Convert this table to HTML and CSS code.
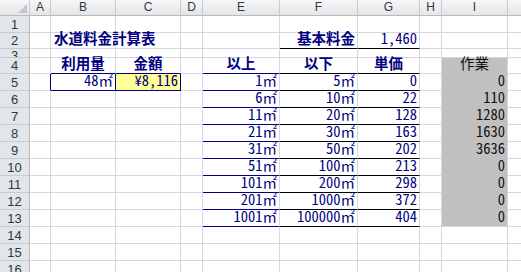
FILE: index.html
```html
<!DOCTYPE html>
<html lang="ja">
<head>
<meta charset="utf-8">
<title>水道料金計算表</title>
<link rel="stylesheet" href="styles.css">
</head>
<body>
<div class="view">
<div class="sheet">
  <div class="h corner"><div class="tri"></div></div>
  <div class="h">A</div><div class="h">B</div><div class="h">C</div><div class="h">D</div><div class="h">E</div><div class="h">F</div><div class="h">G</div><div class="h">H</div><div class="h">I</div><div class="h"></div>

  <div class="r">1</div>
  <div class="c"></div><div class="c"></div><div class="c"></div><div class="c"></div><div class="c"></div><div class="c"></div><div class="c"></div><div class="c"></div><div class="c"></div><div class="c"></div>

  <div class="r">2</div>
  <div class="c"></div><div class="c b title">水道料金計算表</div><div class="c"></div><div class="c"></div><div class="c"></div><div class="c b rt bk">基本料金</div><div class="c rt bk">1,460</div><div class="c"></div><div class="c"></div><div class="c"></div>

  <div class="r r3">3</div>
  <div class="c"></div><div class="c"></div><div class="c"></div><div class="c"></div><div class="c"></div><div class="c"></div><div class="c"></div><div class="c"></div><div class="c"></div><div class="c"></div>

  <div class="r">4</div>
  <div class="c"></div><div class="c b ctr bn">利用量</div><div class="c b ctr bn">金額</div><div class="c"></div><div class="c b ctr bn">以上</div><div class="c b ctr bk">以下</div><div class="c b ctr bk">単価</div><div class="c"></div><div class="c g ctr">作業</div><div class="c"></div>

  <div class="r">5</div>
  <div class="c rn"></div><div class="c rt bn rn">48㎡</div><div class="c rt y bn rn">¥8,116</div><div class="c"></div><div class="c rt bn">1㎡</div><div class="c rt bk">5㎡</div><div class="c rt bk">0</div><div class="c"></div><div class="c g rt">0</div><div class="c"></div>

  <div class="r">6</div>
  <div class="c"></div><div class="c"></div><div class="c"></div><div class="c"></div><div class="c rt bn">6㎡</div><div class="c rt bk">10㎡</div><div class="c rt bk">22</div><div class="c"></div><div class="c g rt">110</div><div class="c"></div>

  <div class="r">7</div>
  <div class="c"></div><div class="c"></div><div class="c"></div><div class="c"></div><div class="c rt bn">11㎡</div><div class="c rt bk">20㎡</div><div class="c rt bk">128</div><div class="c"></div><div class="c g rt">1280</div><div class="c"></div>

  <div class="r">8</div>
  <div class="c"></div><div class="c"></div><div class="c"></div><div class="c"></div><div class="c rt bn">21㎡</div><div class="c rt bk">30㎡</div><div class="c rt bk">163</div><div class="c"></div><div class="c g rt">1630</div><div class="c"></div>

  <div class="r">9</div>
  <div class="c"></div><div class="c"></div><div class="c"></div><div class="c"></div><div class="c rt bn">31㎡</div><div class="c rt bk">50㎡</div><div class="c rt bk">202</div><div class="c"></div><div class="c g rt">3636</div><div class="c"></div>

  <div class="r">10</div>
  <div class="c"></div><div class="c"></div><div class="c"></div><div class="c"></div><div class="c rt bn">51㎡</div><div class="c rt bk">100㎡</div><div class="c rt bk">213</div><div class="c"></div><div class="c g rt">0</div><div class="c"></div>

  <div class="r">11</div>
  <div class="c"></div><div class="c"></div><div class="c"></div><div class="c"></div><div class="c rt bn">101㎡</div><div class="c rt bk">200㎡</div><div class="c rt bk">298</div><div class="c"></div><div class="c g rt">0</div><div class="c"></div>

  <div class="r">12</div>
  <div class="c"></div><div class="c"></div><div class="c"></div><div class="c"></div><div class="c rt bn">201㎡</div><div class="c rt bk">1000㎡</div><div class="c rt bk">372</div><div class="c"></div><div class="c g rt">0</div><div class="c"></div>

  <div class="r">13</div>
  <div class="c"></div><div class="c"></div><div class="c"></div><div class="c"></div><div class="c rt bn">1001㎡</div><div class="c rt bk">100000㎡</div><div class="c rt bk">404</div><div class="c"></div><div class="c g g-last rt">0</div><div class="c"></div>

  <div class="r">14</div>
  <div class="c"></div><div class="c"></div><div class="c"></div><div class="c"></div><div class="c"></div><div class="c"></div><div class="c"></div><div class="c"></div><div class="c"></div><div class="c"></div>

  <div class="r">15</div>
  <div class="c"></div><div class="c"></div><div class="c"></div><div class="c"></div><div class="c"></div><div class="c"></div><div class="c"></div><div class="c"></div><div class="c"></div><div class="c"></div>

  <div class="r">16</div>
  <div class="c"></div><div class="c"></div><div class="c"></div><div class="c"></div><div class="c"></div><div class="c"></div><div class="c"></div><div class="c"></div><div class="c"></div><div class="c"></div>
</div>
</div>
</body>
</html>
```

FILE: styles.css
```css
html, body {
  margin: 0;
  padding: 0;
  background: #ffffff;
}

.view {
  width: 521px;
  height: 272px;
  overflow: hidden;
}

.sheet {
  display: grid;
  grid-template-columns: 30px 21px 65px 65px 22px 77px 78px 62px 22px 66px 65px;
  grid-template-rows: 16px 17px 16px 9px 16px repeat(12, 17px);
  width: max-content;
  font-family: "Noto Sans CJK JP", "Noto Sans", sans-serif;
  font-size: 14.5px;
  font-feature-settings: "hwid";
  color: #000080;
}

.h,
.r,
.c {
  box-sizing: border-box;
  display: flex;
  white-space: nowrap;
  line-height: 1;
}

/* column headers */
.h {
  background: linear-gradient(#f7f7f8, #e4e5e8);
  border-right: 1px solid #c9cace;
  border-bottom: 1px solid #b7b9be;
  color: #2c3b3b;
  font-family: "Liberation Sans", Arial, sans-serif;
  font-size: 12px;
  justify-content: center;
  align-items: center;
  padding-bottom: 1px;
}

.corner {
  justify-content: flex-end;
  align-items: flex-end;
  padding: 0 2px 2px 0;
}

.tri {
  width: 9px;
  height: 9px;
  background: #c3c5c9;
  clip-path: polygon(100% 0, 100% 100%, 0 100%);
}

/* row headers */
.r {
  background: #e2e5ea;
  border-right: 1px solid #b7b9be;
  border-bottom: 1px solid #c9cace;
  color: #2c3b3b;
  font-family: "Liberation Sans", Arial, sans-serif;
  font-size: 13px;
  justify-content: center;
  align-items: center;
  overflow: hidden;
}

.r3 {
  align-items: flex-start;
  line-height: 13px;
}

/* cells */
.c {
  border-right: 1px solid #d6d6de;
  border-bottom: 1px solid #d6d6de;
  align-items: flex-end;
  padding: 0 2px 3px;
}

.b { font-weight: bold; }
.title { padding-left: 3px; }
.rt { justify-content: flex-end; }
.ctr { justify-content: center; }

.bn { border-bottom-color: #000080; }
.bk { border-bottom-color: #000000; }
.rn { border-right-color: #000080; }

.y { background: #ffff99; }

.g {
  background: #c0c0c0;
  border-bottom-color: #c0c0c0;
  color: #111111;
}

.g-last { border-bottom-color: #d6d6de; }
```
